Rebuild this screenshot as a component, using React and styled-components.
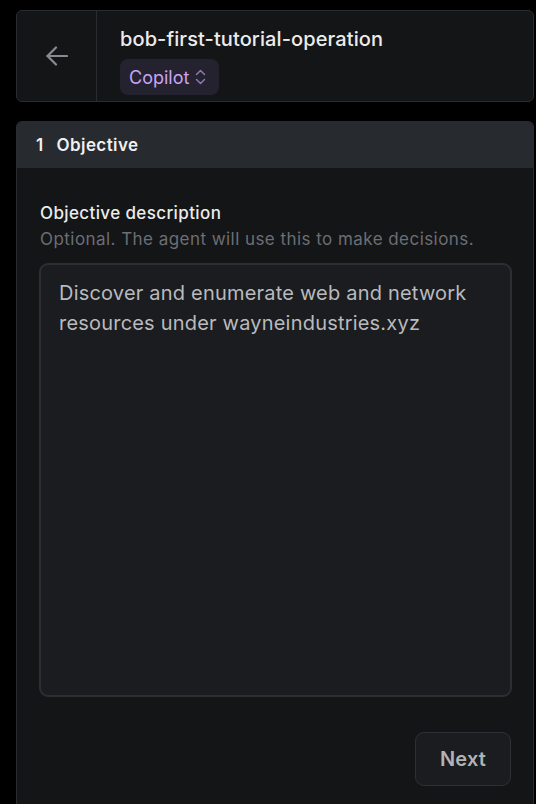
import React from "react";
import styled, { createGlobalStyle } from "styled-components";

const Global = createGlobalStyle`
  html, body { margin: 0; padding: 0; background: #000; }
  body { font-family: Inter, "Noto Sans", "Liberation Sans", sans-serif; -webkit-font-smoothing: antialiased; }
  * { box-sizing: border-box; }
`;

const Page = styled.div`
  padding: 10px 2px 0 16px;
  display: flex;
  flex-direction: column;
  gap: 19px;
  height: 804px;
  overflow: hidden;
`;

const HeaderCard = styled.header`
  display: flex;
  height: 92px;
  background: #141517;
  border: 1px solid #2a2c30;
  border-radius: 6px;
`;

const BackCell = styled.button`
  width: 80px;
  flex: none;
  display: flex;
  align-items: center;
  justify-content: center;
  background: transparent;
  border: none;
  border-right: 1px solid #2a2c30;
  padding: 0 0 1px;
  color: #8a8b8f;
`;

const TitleCell = styled.div`
  display: flex;
  flex-direction: column;
  align-items: flex-start;
  padding: 15px 0 0 23px;
  gap: 7px;
`;

const Title = styled.h1`
  margin: 0;
  font-size: 20px;
  line-height: 26px;
  font-weight: 500;
  color: #ececec;
  letter-spacing: 0.1px;
`;

const Badge = styled.button`
  display: flex;
  align-items: center;
  gap: 6px;
  height: 36px;
  padding: 0 13px 0 9px;
  border: none;
  border-radius: 8px;
  background: #252230;
  color: #c9a3f3;
  font-family: inherit;
  font-size: 18px;
  font-weight: 400;
`;

const Panel = styled.section`
  flex: 1;
  display: flex;
  flex-direction: column;
  background: #141517;
  border: 1px solid #2a2c30;
  border-bottom: none;
  border-radius: 6px 6px 0 0;
  overflow: hidden;
`;

const PanelHeader = styled.div`
  height: 46px;
  flex: none;
  display: flex;
  align-items: center;
  gap: 13px;
  padding-left: 19px;
  background: #272a2e;
  color: #f0f0f0;
  font-size: 17px;
  font-weight: 600;
  letter-spacing: 0.4px;
`;

const PanelBody = styled.div`
  display: flex;
  flex-direction: column;
  padding: 33px 21px 0 22px;
`;

const Label = styled.label`
  padding-left: 1px;
  font-size: 17px;
  line-height: 24px;
  font-weight: 500;
  color: #ececec;
  letter-spacing: 0.38px;
`;

const Hint = styled.div`
  padding-left: 1px;
  margin-top: 3px;
  font-size: 17px;
  line-height: 22px;
  color: #6c6e73;
  letter-spacing: 0.45px;
`;

const TextArea = styled.textarea`
  margin-top: 13px;
  height: 434px;
  width: 100%;
  resize: none;
  background: #1a1c1f;
  border: 2px solid #2c2e32;
  border-radius: 9px;
  padding: 13px 18px;
  font-family: inherit;
  font-size: 20px;
  line-height: 30px;
  letter-spacing: 0.2px;
  color: #b9babd;
  outline: none;
`;

const Actions = styled.div`
  display: flex;
  justify-content: flex-end;
  margin-top: 35px;
  padding-right: 1px;
`;

const Button = styled.button`
  width: 96px;
  height: 54px;
  background: #1a1c1f;
  border: 1px solid #2e3035;
  border-radius: 9px;
  color: #b1b2b6;
  font-family: inherit;
  font-size: 20px;
  font-weight: 600;
  letter-spacing: 0.2px;
`;

const ArrowLeft = () => (
  <svg width="22" height="20" viewBox="0 0 22 20" fill="none" stroke="currentColor" strokeWidth="2.2" strokeLinecap="round" strokeLinejoin="round">
    <path d="M21 10H1.5" />
    <path d="M10 1.5L1.5 10L10 18.5" />
  </svg>
);

const Chevrons = () => (
  <svg width="11" height="16" viewBox="0 0 11 16" fill="none" stroke="#8f77ad" strokeWidth="1.5" strokeLinecap="round" strokeLinejoin="round">
    <path d="M1.5 5.5L5.5 1.5L9.5 5.5" />
    <path d="M1.5 10.5L5.5 14.5L9.5 10.5" />
  </svg>
);

export default function App() {
  return (
    <>
      <Global />
      <Page>
        <HeaderCard>
          <BackCell aria-label="Back"><ArrowLeft /></BackCell>
          <TitleCell>
            <Title>bob-first-tutorial-operation</Title>
            <Badge>Copilot <Chevrons /></Badge>
          </TitleCell>
        </HeaderCard>
        <Panel>
          <PanelHeader><span>1</span><span>Objective</span></PanelHeader>
          <PanelBody>
            <Label>Objective description</Label>
            <Hint>Optional. The agent will use this to make decisions.</Hint>
            <TextArea defaultValue={"Discover and enumerate web and network resources under wayneindustries.xyz"} />
            <Actions>
              <Button>Next</Button>
            </Actions>
          </PanelBody>
        </Panel>
      </Page>
    </>
  );
}
